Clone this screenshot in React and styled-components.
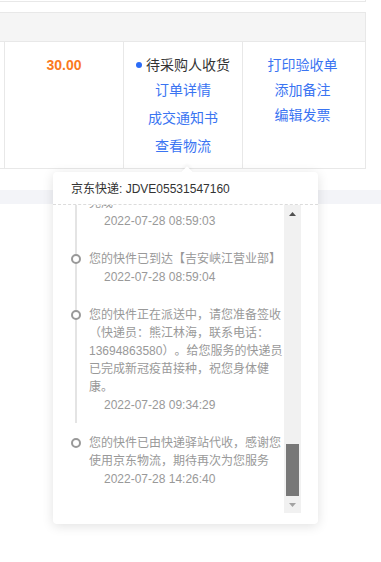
import React from "react";
import styled, { createGlobalStyle } from "styled-components";

const GlobalStyle = createGlobalStyle`
  html, body { margin: 0; padding: 0; background: #fff; }
  body {
    font-family: "Liberation Sans", "Noto Sans CJK SC", sans-serif;
    text-spacing-trim: space-all;
    text-autospace: no-autospace;
  }
`;

const Page = styled.div`
  position: relative;
  width: 381px;
  height: 562px;
  overflow: hidden;
  background: #fff;
`;

const TopStrip = styled.div`
  width: 365px;
  height: 1px;
  border-bottom: 1px solid #e8e8e8;
  border-right: 1px solid #e8e8e8;
`;

const Table = styled.div`
  margin-top: 10px;
  width: 366px;
  box-sizing: border-box;
  border: 1px solid #e8e8e8;
  border-left: none;
`;

const TableHead = styled.div`
  height: 28px;
  background: #f5f5f5;
  border-bottom: 1px solid #e8e8e8;
`;

const Row = styled.div`
  display: grid;
  grid-template-columns: 5px 119px 119px 119px;
  height: 126px;
`;

const Cell = styled.div`
  border-right: ${(p) => (p.$last ? "none" : "1px solid #e8e8e8")};
  display: flex;
  flex-direction: column;
  align-items: center;
  padding-top: ${(p) => p.$pt || 12}px;
  box-sizing: border-box;
`;

const Price = styled.div`
  font-size: 14px;
  font-weight: bold;
  line-height: 22px;
  color: #fa7a1f;
`;

const Status = styled.div`
  display: flex;
  align-items: center;
  gap: 4px;
  font-size: 14px;
  line-height: 22px;
  color: #333;
`;

const StatusDot = styled.span`
  width: 6px;
  height: 6px;
  border-radius: 50%;
  background: #2b6cf7;
`;

const Link = styled.a`
  display: block;
  font-size: 14px;
  line-height: ${(p) => p.$lh}px;
  color: #3a74f2;
  text-decoration: none;
  cursor: pointer;
`;

const Band = styled.div`
  margin-top: 21px;
  height: 14px;
  background: #f3f4f8;
`;

const Popup = styled.div`
  position: absolute;
  left: 53px;
  top: 172px;
  width: 265px;
  height: 352px;
  background: #fff;
  border-radius: 4px;
  box-shadow: 0 2px 12px rgba(0, 0, 0, 0.12);
  display: flex;
  flex-direction: column;
`;

const Pointer = styled.div`
  position: absolute;
  top: -4px;
  left: 130px;
  width: 8px;
  height: 8px;
  background: #fff;
  transform: rotate(45deg);
  box-shadow: -2px -2px 3px rgba(0, 0, 0, 0.04);
`;

const PopHeader = styled.div`
  position: relative;
  padding: 8px 18px 6px;
  font-size: 12px;
  line-height: 18px;
  color: #333;
  border-bottom: 1px dashed #dcdcdc;
`;

const PopBody = styled.div`
  display: flex;
  padding: 0 17px 11px 0;
`;

const List = styled.div`
  flex: 1;
  height: 308px;
  box-sizing: border-box;
  overflow: hidden;
  display: flex;
  flex-direction: column;
  justify-content: flex-end;
  padding: 0 0 16px 17px;
`;

const Timeline = styled.div`
  flex-shrink: 0;
`;

const Item = styled.div`
  display: grid;
  grid-template-columns: 12px 195px;
  column-gap: 7px;
  padding: 11px 0 9px;
  background: ${(p) =>
    p.$last
      ? "none"
      : "linear-gradient(#e4e4e4, #e4e4e4) no-repeat 5px 0 / 2px 100%"};
`;

const Node = styled.div`
  width: 10px;
  height: 10px;
  box-sizing: border-box;
  margin: 4px 0 0 1px;
  border: 2px solid #999;
  border-radius: 50%;
  background: #fff;
`;

const Content = styled.div`
  font-size: 12px;
  line-height: 18px;
  color: #999;
`;

const Time = styled.div`
  padding-left: 15px;
`;

const Scrollbar = styled.div`
  width: 17px;
  height: 308px;
  display: flex;
  flex-direction: column;
  background: #f1f1f1;
`;

const ArrowBtn = styled.div`
  height: 17px;
  display: flex;
  align-items: center;
  justify-content: center;
`;

const Track = styled.div`
  flex: 1;
  display: flex;
  flex-direction: column;
  justify-content: flex-end;
  padding: 0 2px;
`;

const Thumb = styled.div`
  height: 52px;
  background: #787878;
`;

const Tri = ({ down, color }) => (
  <svg width="7" height="4" viewBox="0 0 7 4">
    <polygon points={down ? "0,0 7,0 3.5,4" : "0,4 7,4 3.5,0"} fill={color} />
  </svg>
);

const events = [
  { text: "您的快件已由京东物流揽收", time: "2022-07-27 16:12:45" },
  { text: "您的快件已到达【南昌分拣中心】", time: "2022-07-27 21:40:18" },
  { text: "您的快件在【南昌分拣中心】分拣完成", time: "2022-07-27 23:05:52" },
  { text: "您的快件由【南昌分拣中心】准备发往【吉安峡江营业部】", time: "2022-07-28 01:17:36" },
  { text: "您的快件在【吉安峡江营业部】分拣完成", time: "2022-07-28 08:59:03" },
  { text: "您的快件已到达【吉安峡江营业部】", time: "2022-07-28 08:59:04" },
  {
    text:
      "您的快件正在派送中，请您准备签收（快递员：熊江林海，联系电话：13694863580）。给您服务的快递员已完成新冠疫苗接种，祝您身体健康。",
    time: "2022-07-28 09:34:29",
  },
  {
    text: "您的快件已由快递驿站代收，感谢您使用京东物流，期待再次为您服务",
    time: "2022-07-28 14:26:40",
  },
];

export default function App() {
  return (
    <Page>
      <GlobalStyle />
      <TopStrip />
      <Table>
        <TableHead />
        <Row>
          <Cell />
          <Cell>
            <Price>30.00</Price>
          </Cell>
          <Cell>
            <Status>
              <StatusDot />
              待采购人收货
            </Status>
            <Link $lh={28}>订单详情</Link>
            <Link $lh={28}>成交通知书</Link>
            <Link $lh={28}>查看物流</Link>
          </Cell>
          <Cell $last $pt={11}>
            <Link $lh={25}>打印验收单</Link>
            <Link $lh={25}>添加备注</Link>
            <Link $lh={25}>编辑发票</Link>
          </Cell>
        </Row>
      </Table>
      <Band />
      <Popup>
        <Pointer />
        <PopHeader>京东快递: JDVE05531547160</PopHeader>
        <PopBody>
          <List>
            <Timeline>
              {events.map((e, i) => (
                <Item key={i} $last={i === events.length - 1}>
                  <Node />
                  <Content>
                    {e.text}
                    <Time>{e.time}</Time>
                  </Content>
                </Item>
              ))}
            </Timeline>
          </List>
          <Scrollbar>
            <ArrowBtn>
              <Tri color="#505050" />
            </ArrowBtn>
            <Track>
              <Thumb />
            </Track>
            <ArrowBtn>
              <Tri down color="#a3a3a3" />
            </ArrowBtn>
          </Scrollbar>
        </PopBody>
      </Popup>
    </Page>
  );
}
